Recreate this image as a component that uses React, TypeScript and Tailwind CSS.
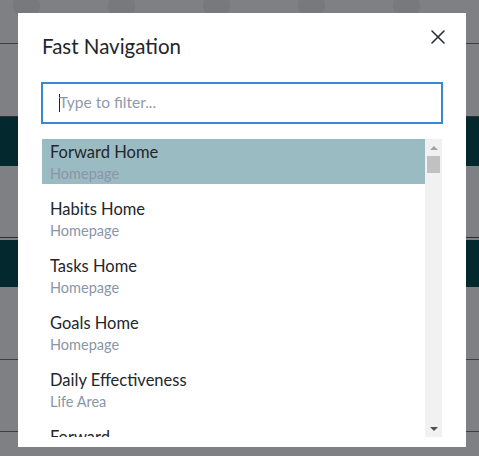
import { X } from 'lucide-react'

const items = [
  { title: 'Forward Home', sub: 'Homepage' },
  { title: 'Habits Home', sub: 'Homepage' },
  { title: 'Tasks Home', sub: 'Homepage' },
  { title: 'Goals Home', sub: 'Homepage' },
  { title: 'Daily Effectiveness', sub: 'Life Area' },
  { title: 'Forward', sub: 'Life Area' },
]

function Backdrop() {
  return (
    <div className="h-[456px] w-[479px] overflow-hidden bg-[#7f8083]">
      {/* dimmed avatars row */}
      <div className="h-[44px] border-b border-[#3d3e40] overflow-hidden">
        <div className="flex gap-[68px] pl-[13px] -mt-[8px]">
          {[0, 1, 2, 3, 4].map((i) => (
            <div key={i} className="w-[27px] h-[27px] rounded-full bg-[#77797c]" />
          ))}
        </div>
      </div>
      <div className="h-[73px] border-b border-[#2f3032]" />
      <div className="h-[49px] bg-[#03292f]" />
      <div className="h-[72px] border-b border-[#2f3032]" />
      <div className="h-[47px] mt-[2px] bg-[#03292f]" />
      <div className="h-[73px] border-b border-[#3d3e40]" />
      <div className="h-[72px] border-b border-[#3d3e40]" />
    </div>
  )
}

export default function App() {
  return (
    <div className="relative w-[479px] h-[456px] overflow-hidden" style={{ fontFamily: 'Lato, "Noto Sans", sans-serif' }}>
      <Backdrop />

      {/* modal */}
      <div className="absolute left-[18px] top-[13px] w-[448px] h-[434px] bg-white flex flex-col px-[23px]">
        <div className="flex items-start justify-between pt-[20px]">
          <h2 className="text-[20.5px] leading-[24px] text-[#23262b] pl-[1px] mt-[1px]">Fast Navigation</h2>
          <button className="mt-[-8px] mr-[-7px] text-[#2b2f36]">
            <X className="w-[24px] h-[24px]" strokeWidth={1.6} />
          </button>
        </div>

        <div className="mt-[24px] h-[42px] border-2 border-[#3b87d2] flex items-center pl-[16px]">
          <span className="w-px h-[18px] bg-[#222] mr-[-1px]" />
          <input
            type="text"
            placeholder="Type to filter..."
            className="flex-1 outline-none text-[15.5px] text-[#333] placeholder:text-[#8f99ab] bg-transparent"
          />
        </div>

        <div className="mt-[15px] mx-[1px] h-[298px] flex overflow-hidden">
          <div className="flex-1 flex flex-col gap-[12px]">
            {items.map((it, i) => (
              <div
                key={it.title}
                className={`h-[45px] shrink-0 pl-[8px] flex flex-col ${i === 0 ? 'bg-[#9bbbc2]' : ''}`}
              >
                <span className="text-[16.5px] leading-[20px] mt-[3px] text-[#23262b]">{it.title}</span>
                <span className="text-[14.5px] leading-[18px] mt-[3px] text-[#8a95a8]">{it.sub}</span>
              </div>
            ))}
          </div>
          <div className="w-[17px] shrink-0 bg-[#f1f1f1] flex flex-col items-center">
            <div className="h-[17px] flex items-center justify-center">
              <span className="w-0 h-0 border-l-[4px] border-r-[4px] border-b-[4px] border-l-transparent border-r-transparent border-b-[#a3a3a3]" />
            </div>
            <div className="w-[13px] h-[17px] bg-[#c1c1c1]" />
            <div className="flex-1" />
            <div className="h-[17px] flex items-center justify-center">
              <span className="w-0 h-0 border-l-[4px] border-r-[4px] border-t-[4px] border-l-transparent border-r-transparent border-t-[#505050]" />
            </div>
          </div>
        </div>
      </div>
    </div>
  )
}
